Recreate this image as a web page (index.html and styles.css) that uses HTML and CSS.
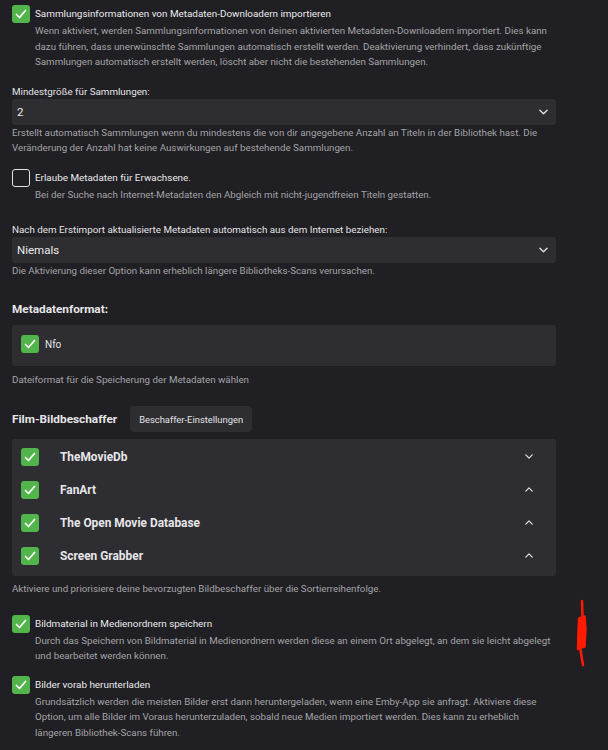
FILE: index.html
```html
<!DOCTYPE html>
<html lang="de">
<head>
    <meta charset="UTF-8">
    <meta name="viewport" content="width=device-width, initial-scale=1.0">
    <title>Metadaten-Einstellungen</title>
    <link rel="stylesheet" href="styles.css">
</head>
<body>
    <div class="page">

        <div class="check-item first">
            <span class="box checked"><svg viewBox="0 0 18 18"><path d="M4.5 9.5l3 3 6-7"/></svg></span>
            <div class="check-text">
                <div class="label">Sammlungsinformationen von Metadaten-Downloadern importieren</div>
                <div class="desc">Wenn aktiviert, werden Sammlungsinformationen von deinen aktivierten Metadaten-Downloadern importiert. Dies kann dazu führen, dass unerwünschte Sammlungen automatisch erstellt werden. Deaktivierung verhindert, dass zukünftige Sammlungen automatisch erstellt werden, löscht aber nicht die bestehenden Sammlungen.</div>
            </div>
        </div>

        <div class="field field-min">
            <div class="field-label">Mindestgröße für Sammlungen:</div>
            <div class="select">
                <span>2</span>
                <svg class="chev" viewBox="0 0 10 6"><path d="M1 1l4 4 4-4"/></svg>
            </div>
            <div class="desc">Erstellt automatisch Sammlungen wenn du mindestens die von dir angegebene Anzahl an Titeln in der Bibliothek hast. Die Veränderung der Anzahl hat keine Auswirkungen auf bestehende Sammlungen.</div>
        </div>

        <div class="check-item adult">
            <span class="box"></span>
            <div class="check-text">
                <div class="label">Erlaube Metadaten für Erwachsene.</div>
                <div class="desc">Bei der Suche nach Internet-Metadaten den Abgleich mit nicht-jugendfreien Titeln gestatten.</div>
            </div>
        </div>

        <div class="field field-refresh">
            <div class="field-label">Nach dem Erstimport aktualisierte Metadaten automatisch aus dem Internet beziehen:</div>
            <div class="select">
                <span>Niemals</span>
                <svg class="chev" viewBox="0 0 10 6"><path d="M1 1l4 4 4-4"/></svg>
            </div>
            <div class="desc">Die Aktivierung dieser Option kann erheblich längere Bibliotheks-Scans verursachen.</div>
        </div>

        <h2 class="section-title meta-title">Metadatenformat:</h2>
        <div class="panel format-panel">
            <span class="box checked"><svg viewBox="0 0 18 18"><path d="M4.5 9.5l3 3 6-7"/></svg></span>
            <span class="format-name">Nfo</span>
        </div>
        <div class="desc after-panel">Dateiformat für die Speicherung der Metadaten wählen</div>

        <div class="fetcher-head">
            <h2 class="section-title">Film-Bildbeschaffer</h2>
            <button class="btn">Beschaffer-Einstellungen</button>
        </div>
        <div class="panel fetcher-list">
            <div class="fetcher">
                <span class="box checked"><svg viewBox="0 0 18 18"><path d="M4.5 9.5l3 3 6-7"/></svg></span>
                <span class="fetcher-name">TheMovieDb</span>
                <svg class="arrow" viewBox="0 0 10 6"><path d="M1 1l4 4 4-4"/></svg>
            </div>
            <div class="fetcher">
                <span class="box checked"><svg viewBox="0 0 18 18"><path d="M4.5 9.5l3 3 6-7"/></svg></span>
                <span class="fetcher-name">FanArt</span>
                <svg class="arrow" viewBox="0 0 10 6"><path d="M1 5l4-4 4 4"/></svg>
            </div>
            <div class="fetcher">
                <span class="box checked"><svg viewBox="0 0 18 18"><path d="M4.5 9.5l3 3 6-7"/></svg></span>
                <span class="fetcher-name">The Open Movie Database</span>
                <svg class="arrow" viewBox="0 0 10 6"><path d="M1 5l4-4 4 4"/></svg>
            </div>
            <div class="fetcher">
                <span class="box checked"><svg viewBox="0 0 18 18"><path d="M4.5 9.5l3 3 6-7"/></svg></span>
                <span class="fetcher-name">Screen Grabber</span>
                <svg class="arrow" viewBox="0 0 10 6"><path d="M1 5l4-4 4 4"/></svg>
            </div>
        </div>
        <div class="desc after-list">Aktiviere und priorisiere deine bevorzugten Bildbeschaffer über die Sortierreihenfolge.</div>

        <div class="check-item save-images">
            <span class="box checked"><svg viewBox="0 0 18 18"><path d="M4.5 9.5l3 3 6-7"/></svg></span>
            <div class="check-text">
                <div class="label">Bildmaterial in Medienordnern speichern</div>
                <div class="desc">Durch das Speichern von Bildmaterial in Medienordnern werden diese an einem Ort abgelegt, an dem sie leicht abgelegt und bearbeitet werden können.</div>
            </div>
        </div>

        <div class="check-item preload">
            <span class="box checked"><svg viewBox="0 0 18 18"><path d="M4.5 9.5l3 3 6-7"/></svg></span>
            <div class="check-text">
                <div class="label">Bilder vorab herunterladen</div>
                <div class="desc">Grundsätzlich werden die meisten Bilder erst dann heruntergeladen, wenn eine Emby-App sie anfragt. Aktiviere diese Option, um alle Bilder im Voraus herunterzuladen, sobald neue Medien importiert werden. Dies kann zu erheblich längeren Bibliothek-Scans führen.</div>
            </div>
        </div>
    </div>

    <!-- red pen mark drawn over the screenshot -->
    <svg class="pen-mark" viewBox="0 0 20 70">
        <path d="M9 2 L9.5 18 L6 20 L5 50 L7 48 L10 66" />
        <path class="blob" d="M6 19 L12 17 L13 30 L12 48 L8 49 L5 50 Z" />
    </svg>
</body>
</html>
```

FILE: styles.css
```css
* {
    margin: 0;
    padding: 0;
    box-sizing: border-box;
}

html, body {
    width: 100%;
    height: 100%;
    background-color: #201f23;
    color: #e4e4e6;
    font-family: Roboto, "Noto Sans", Arial, sans-serif;
    overflow: hidden;
}

.page {
    width: 556px;
    padding: 5px 0 0 12px;
}

/* checkboxes */

.box {
    flex: none;
    width: 18px;
    height: 18px;
    border-radius: 3px;
    border: 1.5px solid #e2e2e2;
    display: flex;
    align-items: center;
    justify-content: center;
}

.box.checked {
    background-color: #52b54b;
    border: none;
}

.box svg {
    width: 18px;
    height: 18px;
}

.box svg path {
    fill: none;
    stroke: white;
    stroke-width: 1.7;
    stroke-linecap: round;
    stroke-linejoin: round;
}

.check-item {
    display: flex;
    gap: 5px;
}

.label {
    font-size: 9.9px;
    line-height: 18px;
    color: #ececee;
}

.desc {
    font-size: 9.75px;
    line-height: 15.5px;
    color: #a5a5a8;
}

.check-text {
    flex: 1;
}

.adult { margin-top: 13px; }
.save-images { margin-top: 18px; }
.preload { margin-top: 12px; }

/* select fields */

.field-min { margin-top: 15px; }
.field-refresh { margin-top: 21px; }

.field-label {
    font-size: 9.8px;
    line-height: 14px;
    color: #e4e4e6;
}

.select {
    height: 26px;
    background-color: #2e2d32;
    border-radius: 3px;
    display: flex;
    align-items: center;
    justify-content: space-between;
    padding: 0 8px 0 5px;
    font-size: 11.5px;
    color: #ececee;
}

.chev {
    width: 9px;
    height: 6px;
}

.chev path, .arrow path {
    fill: none;
    stroke: #dcdcde;
    stroke-width: 1.6;
    stroke-linecap: round;
    stroke-linejoin: round;
}

/* sections */

.section-title {
    font-size: 11.8px;
    font-weight: bold;
    line-height: 18px;
    color: #e6e6e8;
}

.meta-title { margin-top: 21px; }

.panel {
    background-color: #2e2d32;
    border-radius: 3px;
}

.format-panel {
    margin-top: 7px;
    height: 41px;
    display: flex;
    align-items: center;
    gap: 6px;
    padding: 0 9px 2px;
    font-size: 10px;
}

.after-panel { margin-top: 6px; }

.fetcher-head {
    margin-top: 19px;
    display: flex;
    align-items: center;
    gap: 13px;
}

.btn {
    height: 26px;
    padding: 0 9px;
    border: none;
    border-radius: 4px;
    background-color: #2e2d32;
    color: #e4e4e6;
    font-family: inherit;
    font-size: 9.4px;
}

.fetcher-list {
    margin-top: 7px;
    padding: 1px 0 4px;
}

.fetcher {
    height: 33px;
    display: flex;
    align-items: center;
    padding: 0 23px 0 9px;
}

.fetcher-name {
    flex: 1;
    margin-left: 21px;
    font-size: 11.9px;
    font-weight: bold;
    color: #e6e6e8;
}

.arrow {
    width: 8px;
    height: 5px;
}

.after-list { margin-top: 5px; }

.pen-mark {
    position: absolute;
    left: 573px;
    top: 599px;
    width: 20px;
    height: 70px;
}

.pen-mark path {
    fill: none;
    stroke: #ff1a00;
    stroke-width: 2.5;
    stroke-linecap: round;
    stroke-linejoin: round;
}

.pen-mark .blob {
    fill: #ff1a00;
    stroke-width: 1.5;
}
```
